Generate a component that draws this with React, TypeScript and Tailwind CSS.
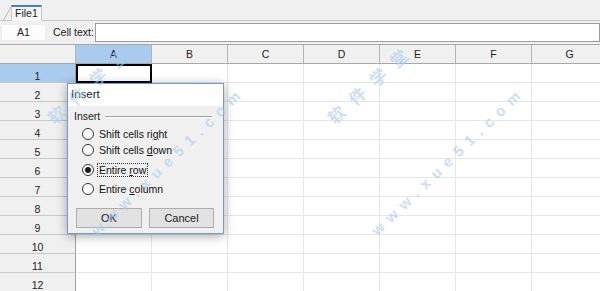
const COLS = ["A", "B", "C", "D", "E", "F", "G"];
const ROWS = Array.from({ length: 12 }, (_, i) => i + 1);

function Radio({
  label,
  checked = false,
  focused = false,
  className = "",
}: {
  label: React.ReactNode;
  checked?: boolean;
  focused?: boolean;
  className?: string;
}) {
  return (
    <div className={`flex h-[16px] items-center pl-[14px] ${className}`}>
      <span className="flex h-[12px] w-[12px] items-center justify-center rounded-full border border-[#333] bg-white">
        {checked && <span className="h-[6px] w-[6px] rounded-full bg-[#1a1a1a]" />}
      </span>
      <span
        className={`ml-[3px] px-px text-[10.5px] leading-[12px] text-[#111] ${
          focused ? "border border-dotted border-[#333]" : "border border-transparent"
        }`}
      >
        {label}
      </span>
    </div>
  );
}

function Watermark({ left }: { left: number }) {
  return (
    <>
      <span
        className="absolute origin-[0_50%] -rotate-[42deg] whitespace-nowrap text-[17px] font-bold leading-[20px] tracking-[11px] text-[#a9cdee] opacity-60"
        style={{ left: left, top: 110, fontFamily: '"Noto Sans CJK SC", sans-serif' }}
      >
        软件学堂
      </span>
      <span
        className="absolute origin-[0_50%] -rotate-[44deg] whitespace-nowrap text-[15px] font-bold leading-[18px] tracking-[7px] text-[#a9cdee] opacity-60"
        style={{ left: left + 44, top: 224, fontFamily: '"Liberation Sans", sans-serif' }}
      >
        www.xue51.com
      </span>
    </>
  );
}

export default function App() {
  return (
    <div
      className="relative h-[291px] w-[600px] overflow-hidden bg-white text-[#222]"
      style={{ fontFamily: '"Liberation Sans", Arial, sans-serif' }}
    >
      {/* tab strip */}
      <div className="flex h-[21px] items-end border-b border-[#c6c6c6] bg-[#f0f0f0] pl-[3px]">
        <svg width="8" height="16" className="-mb-px" viewBox="0 0 8 16">
          <path d="M0 16 L8 2" stroke="#b8b8b8" strokeWidth="1" fill="none" />
        </svg>
        <div className="-mb-px flex h-[16px] items-center border-x border-b border-b-[#f7f7f7] border-x-[#c6c6c6] border-t-2 border-t-[#3d7fd1] bg-[#f7f7f7] px-[3px] text-[10.5px] leading-none">
          File1
        </div>
      </div>

      {/* formula row */}
      <div className="flex h-[24px] items-center border-b border-[#a8a8a8] bg-[#f0f0f0]">
        <div className="ml-[2px] flex h-[15px] w-[43px] items-center justify-center bg-[#fcfcfc] text-[10.5px]">
          A1
        </div>
        <span className="ml-[8px] text-[10.5px]">Cell text:</span>
        <div className="ml-[1px] h-[19px] flex-1 border border-[#9c9c9c] bg-white" />
      </div>

      {/* column header */}
      <div className="flex h-[19px] border-b border-[#a8a8a8] bg-[#f0f0f0]">
        <div className="w-[76px] shrink-0 border-r border-[#b4b4b4]" />
        {COLS.map((c, i) => (
          <div
            key={c}
            className={`flex w-[76px] shrink-0 items-center justify-center border-r border-[#b4b4b4] pt-px text-[10.5px] ${
              i === 0 ? "bg-[#a9cbee]" : ""
            }`}
          >
            {c}
          </div>
        ))}
      </div>

      {/* rows */}
      {ROWS.map((r) => (
        <div key={r} className="flex h-[19px]">
          <div
            className={`flex w-[76px] shrink-0 items-end justify-center border-b border-r border-b-[#c8c8c8] border-r-[#a0a0a0] text-[10.5px] leading-[12px] ${
              r === 1 ? "bg-[#a9cbee]" : "bg-[#f0f0f0]"
            }`}
          >
            {r}
          </div>
          {COLS.map((c, i) => (
            <div
              key={c}
              className={`w-[76px] shrink-0 ${
                r === 1 && i === 0
                  ? "border-2 border-black"
                  : "border-b border-r border-[#e6e6e6]"
              }`}
            />
          ))}
        </div>
      ))}

      {/* Insert dialog */}
      <div className="absolute left-[67px] top-[83px] flex h-[151px] w-[157px] flex-col border border-[#6e9dd4] bg-[#f0f0f0] shadow-[0_2px_10px_rgba(0,0,0,0.35)]">
        <div className="flex h-[22px] items-center bg-white pl-[3px] text-[11.5px]">Insert</div>
        <div className="mt-[4px] flex h-[14px] items-center pl-[6px] pr-[11px]">
          <span className="text-[10.5px]">Insert</span>
          <div className="ml-[5px] h-[2px] flex-1 border-t border-b border-t-[#a0a0a0] border-b-white" />
        </div>
        <Radio
          className="mt-[2px]"
          label={
            <>
              Shift cells ri<u>g</u>ht
            </>
          }
        />
        <Radio
          label={
            <>
              Shift cells <u>d</u>own
            </>
          }
        />
        <Radio
          className="mt-[4px]"
          checked
          focused
          label={
            <>
              Entire <u>r</u>ow
            </>
          }
        />
        <Radio
          className="mt-[3px]"
          label={
            <>
              Entire <u>c</u>olumn
            </>
          }
        />
        <div className="mt-[11px] flex gap-[7px] pl-[8px]">
          <button className="flex h-[20px] w-[66px] items-center justify-center border border-[#adadad] bg-[#e1e1e1] text-[11px]">
            OK
          </button>
          <button className="flex h-[20px] w-[65px] items-center justify-center border border-[#adadad] bg-[#e1e1e1] text-[11px]">
            Cancel
          </button>
        </div>
      </div>

      {/* watermark */}
      <div className="pointer-events-none absolute inset-0">
        <Watermark left={50} />
        <Watermark left={330} />
      </div>
    </div>
  );
}
